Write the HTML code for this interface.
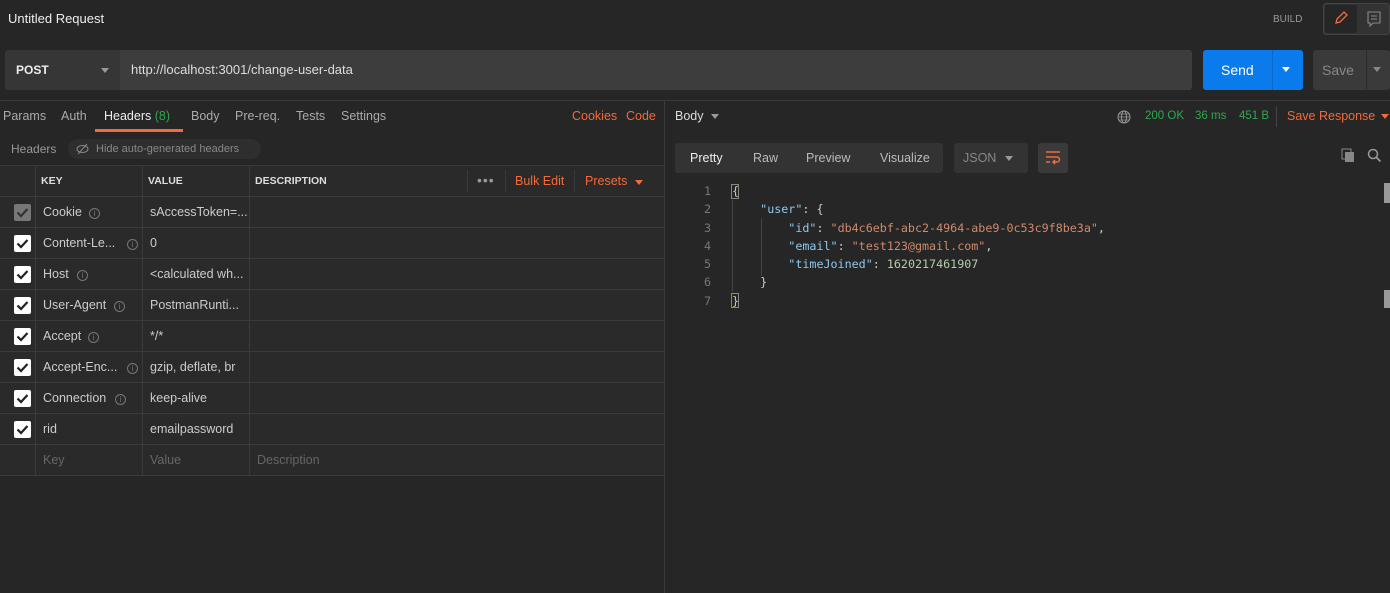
<!DOCTYPE html>
<html><head><style>
*{box-sizing:border-box;margin:0;padding:0}
body{width:1390px;height:593px;background:#262626;font-family:"Liberation Sans",sans-serif;font-size:12px;color:#ccc;position:relative;overflow:hidden}
.a{position:absolute}
.or{color:#f26b3a}
.gr{color:#2fa84f}
.cell{position:absolute;height:31px;line-height:30px;border-bottom:1px solid #3a3a3a}
.cb{position:absolute;left:14px;width:17px;height:17px;background:#fff;border-radius:2px}
.cb svg{position:absolute;left:2px;top:3px}
.info{display:inline-block;width:11px;height:11px;border:1px solid #777;border-radius:50%;font-size:8px;line-height:9px;text-align:center;color:#777;vertical-align:middle;margin-left:8px}
.code{font-family:"DejaVu Sans Mono",monospace;font-size:11.7px;line-height:18.3px;white-space:pre}
</style></head><body>
<div class="a" style="left:8px;top:11px;font-size:13px;color:#eee">Untitled Request</div>
<div class="a" style="left:1273px;top:14px;font-size:10px;color:#999">BUILD</div>
<div class="a" style="left:1323px;top:3px;width:67px;height:32px;border:1px solid #444;border-radius:3px;background:#333"></div>
<div class="a" style="left:1325px;top:5px;width:32px;height:28px;background:#262626;border-radius:2px"></div>
<svg class="a" style="left:1333px;top:10px" width="16" height="16" viewBox="0 0 16 16"><path d="M3 13l1-4 7-7 3 3-7 7z" fill="none" stroke="#f26b3a" stroke-width="1.3"/></svg>
<svg class="a" style="left:1367px;top:11px" width="14" height="16" viewBox="0 0 14 16"><path d="M1 1h12v11H6l-3 3v-3H1z M4 5h6M4 8h6" fill="none" stroke="#888" stroke-width="1.1"/></svg>

<div class="a" style="left:5px;top:50px;width:1187px;height:40px;background:#3d3d3d;border-radius:3px"></div>
<div class="a" style="left:5px;top:50px;width:115px;height:40px;background:#363636;border-radius:3px 0 0 3px"></div>
<div class="a" style="left:16px;top:63px;font-size:12px;color:#eee;font-weight:bold">POST</div>
<div class="a" style="left:101px;top:68px;border:4px solid transparent;border-top:5px solid #999"></div>
<div class="a" style="left:131px;top:62px;font-size:13px;color:#ddd">http://localhost:3001/change-user-data</div>
<div class="a" style="left:1203px;top:50px;width:100px;height:40px;background:#097bed;border-radius:3px"></div>
<div class="a" style="left:1272px;top:50px;width:1px;height:40px;background:#0a68c8"></div>
<div class="a" style="left:1221px;top:62px;font-size:14px;color:#fff">Send</div>
<div class="a" style="left:1282px;top:67px;border:4px solid transparent;border-top:5px solid #fff"></div>
<div class="a" style="left:1313px;top:50px;width:77px;height:40px;background:#3a3a3a;border-radius:3px"></div>
<div class="a" style="left:1366px;top:50px;width:1px;height:40px;background:#2c2c2c"></div>
<div class="a" style="left:1322px;top:62px;font-size:14px;color:#888">Save</div>
<div class="a" style="left:1373px;top:67px;border:4px solid transparent;border-top:5px solid #888"></div>

<div class="a" style="left:0;top:100px;width:1390px;height:1px;background:#3a3a3a"></div>
<div class="a" style="left:664px;top:100px;width:1px;height:493px;background:#3a3a3a"></div>

<div class="a" style="left:3px;top:109px;font-size:12.5px;color:#aaa;word-spacing:0">Params</div>
<div class="a" style="left:61px;top:109px;font-size:12.5px;color:#aaa">Auth</div>
<div class="a" style="left:104px;top:109px;font-size:12.5px;color:#eee">Headers <span class="gr">(8)</span></div>
<div class="a" style="left:95px;top:129px;width:88px;height:3px;background:#f26b3a"></div>
<div class="a" style="left:191px;top:109px;font-size:12.5px;color:#aaa">Body</div>
<div class="a" style="left:235px;top:109px;font-size:12.5px;color:#aaa">Pre-req.</div>
<div class="a" style="left:296px;top:109px;font-size:12.5px;color:#aaa">Tests</div>
<div class="a" style="left:341px;top:109px;font-size:12.5px;color:#aaa">Settings</div>
<div class="a or" style="left:572px;top:109px;font-size:12.5px">Cookies</div>
<div class="a or" style="left:626px;top:109px;font-size:12.5px">Code</div>

<div class="a" style="left:11px;top:142px;font-size:12px;color:#999">Headers</div>
<div class="a" style="left:68px;top:139px;width:193px;height:20px;background:#2e2e2e;border-radius:10px"></div>
<div class="a" style="left:96px;top:143px;font-size:11px;color:#888">Hide auto-generated headers</div>
<svg class="a" style="left:76px;top:143px" width="13" height="12" viewBox="0 0 13 12"><ellipse cx="6.5" cy="6" rx="5.5" ry="3.5" fill="none" stroke="#888"/><path d="M2 11L11 1" stroke="#888"/></svg>

<div class="a" style="left:0;top:165px;width:664px;height:1px;background:#3a3a3a"></div>
<div class="a" style="left:0;top:166px;width:664px;height:310px;background:#2a2a2a"></div>
<div class="a" style="left:35px;top:166px;width:1px;height:310px;background:#3a3a3a"></div>
<div class="a" style="left:142px;top:166px;width:1px;height:310px;background:#3a3a3a"></div>
<div class="a" style="left:249px;top:166px;width:1px;height:310px;background:#3a3a3a"></div>
<div class="a" style="left:0;top:196px;width:664px;height:1px;background:#3a3a3a"></div>
<div class="a" style="left:41px;top:175px;font-size:10.5px;font-weight:bold;color:#ddd">KEY</div>
<div class="a" style="left:148px;top:175px;font-size:10.5px;font-weight:bold;color:#ddd">VALUE</div>
<div class="a" style="left:255px;top:175px;font-size:10.5px;font-weight:bold;color:#ddd">DESCRIPTION</div>
<div class="a" style="left:467px;top:170px;width:1px;height:22px;background:#3a3a3a"></div>
<div class="a" style="left:477px;top:172px;font-size:14px;color:#999;letter-spacing:1px">•••</div>
<div class="a" style="left:505px;top:170px;width:1px;height:22px;background:#3a3a3a"></div>
<div class="a or" style="left:515px;top:174px;font-size:12.5px">Bulk Edit</div>
<div class="a" style="left:574px;top:170px;width:1px;height:22px;background:#3a3a3a"></div>
<div class="a or" style="left:585px;top:174px;font-size:12.5px">Presets</div>
<div class="a" style="left:635px;top:180px;border:4px solid transparent;border-top:5px solid #f26b3a"></div>

<div id="rows"></div>
<script>
var r=[["Cookie","sAccessToken=...",1,1],["Content-Le...","0",1,0],["Host","&lt;calculated wh...",1,0],["User-Agent","PostmanRunti...",1,0],["Accept","*/*",1,0],["Accept-Enc...","gzip, deflate, br",1,0],["Connection","keep-alive",1,0],["rid","emailpassword",0,0]];
var infoX=[89,127,77,114,88,127,115];
var h="";
r.forEach(function(e,i){var y=197+i*31;
h+='<div class="a" style="left:0;top:'+(y+30)+'px;width:664px;height:1px;background:#3a3a3a"></div>';
h+='<div class="cb a" style="top:'+(y+7)+'px;'+(e[3]?'background:#777':'')+'"><svg width="13" height="11" viewBox="0 0 13 11"><path d="M1.5 5.5l3.5 3.5 6.5-7" fill="none" stroke="'+(e[3]?'#333':'#222')+'" stroke-width="2.2"/></svg></div>';
h+='<div class="a" style="left:43px;top:'+(y+8)+'px;color:#ccc;font-size:12.5px">'+e[0]+'</div>';
if(e[2])h+='<div class="a" style="left:'+(infoX[i]-8)+'px;top:'+(y+9)+'px"><span class="info">i</span></div>';
h+='<div class="a" style="left:150px;top:'+(y+8)+'px;color:#ccc;font-size:12.5px">'+e[1]+'</div>';});
var y=197+8*31;
h+='<div class="a" style="left:0;top:'+(y+30)+'px;width:664px;height:1px;background:#3a3a3a"></div>';
h+='<div class="a" style="left:43px;top:'+(y+8)+'px;color:#666;font-size:12.5px">Key</div><div class="a" style="left:150px;top:'+(y+8)+'px;color:#666;font-size:12.5px">Value</div><div class="a" style="left:257px;top:'+(y+8)+'px;color:#666;font-size:12.5px">Description</div>';
document.getElementById('rows').innerHTML=h;
</script>

<div class="a" style="left:675px;top:109px;font-size:12.5px;color:#ddd">Body</div>
<div class="a" style="left:711px;top:114px;border:4px solid transparent;border-top:5px solid #999"></div>
<svg class="a" style="left:1117px;top:110px" width="14" height="14" viewBox="0 0 14 14"><circle cx="7" cy="7" r="6" fill="none" stroke="#999"/><ellipse cx="7" cy="7" rx="2.5" ry="6" fill="none" stroke="#999"/><path d="M1 7h12M2 4h10M2 10h10" stroke="#999" stroke-width=".8"/></svg>
<div class="a gr" style="left:1145px;top:110px;font-size:11.5px">200 OK</div>
<div class="a gr" style="left:1195px;top:110px;font-size:11.5px">36 ms</div>
<div class="a gr" style="left:1239px;top:110px;font-size:11.5px">451 B</div>
<div class="a" style="left:1276px;top:106px;width:1px;height:21px;background:#444"></div>
<div class="a or" style="left:1287px;top:109px;font-size:12.5px">Save Response</div>
<div class="a" style="left:1381px;top:114px;border:4px solid transparent;border-top:5px solid #f26b3a"></div>

<div class="a" style="left:675px;top:143px;width:268px;height:30px;background:#333;border-radius:3px"></div>
<div class="a" style="left:690px;top:151px;font-size:12.5px;color:#eee">Pretty</div>
<div class="a" style="left:753px;top:151px;font-size:12.5px;color:#bbb">Raw</div>
<div class="a" style="left:806px;top:151px;font-size:12.5px;color:#bbb">Preview</div>
<div class="a" style="left:880px;top:151px;font-size:12.5px;color:#bbb">Visualize</div>
<div class="a" style="left:954px;top:143px;width:74px;height:30px;background:#333;border-radius:3px"></div>
<div class="a" style="left:963px;top:151px;font-size:12.5px;color:#888">JSON</div>
<div class="a" style="left:1005px;top:156px;border:4px solid transparent;border-top:5px solid #999"></div>
<div class="a" style="left:1038px;top:143px;width:30px;height:30px;background:#3a3a3a;border-radius:3px"></div>
<svg class="a" style="left:1045px;top:150px" width="16" height="16" viewBox="0 0 16 16"><path d="M1 2h14M1 7h11a2.5 2.5 0 010 5H8M10 10l-2 2 2 2M1 12h4" fill="none" stroke="#f26b3a" stroke-width="1.5"/></svg>
<svg class="a" style="left:1341px;top:148px" width="15" height="15" viewBox="0 0 15 15"><rect x="1" y="1" width="9" height="10" fill="none" stroke="#888"/><rect x="4" y="4" width="9" height="10" fill="#888"/></svg>
<svg class="a" style="left:1367px;top:148px" width="15" height="15" viewBox="0 0 15 15"><circle cx="6" cy="6" r="4.5" fill="none" stroke="#999" stroke-width="1.5"/><path d="M9.5 9.5l4 4" stroke="#999" stroke-width="1.7"/></svg>

<div class="a code" style="left:695px;top:182px;color:#777;text-align:right;width:16px">1
2
3
4
5
6
7</div>
<div class="a" style="left:731px;top:184px;width:8px;height:15px;border:1px solid #888"></div>
<div class="a" style="left:731px;top:293px;width:8px;height:15px;border:1px solid #888"></div>
<div class="a" style="left:732px;top:200px;width:1px;height:92px;background:#444"></div>
<div class="a" style="left:761px;top:218px;width:1px;height:58px;background:#444"></div>
<div class="a code" style="left:732px;top:182px;color:#ccc"><span style="color:#d8c98a">{</span>
    <span style="color:#8fc8ee">"user"</span>: {
        <span style="color:#8fc8ee">"id"</span>: <span style="color:#d08a6a">"db4c6ebf-abc2-4964-abe9-0c53c9f8be3a"</span>,
        <span style="color:#8fc8ee">"email"</span>: <span style="color:#d08a6a">"test123@gmail.com"</span>,
        <span style="color:#8fc8ee">"timeJoined"</span>: <span style="color:#b5cea8">1620217461907</span>
    }
<span style="color:#d8c98a">}</span></div>
<div class="a" style="left:1384px;top:183px;width:6px;height:20px;background:#999"></div>
<div class="a" style="left:1384px;top:290px;width:6px;height:18px;background:#999"></div>
</body></html>
